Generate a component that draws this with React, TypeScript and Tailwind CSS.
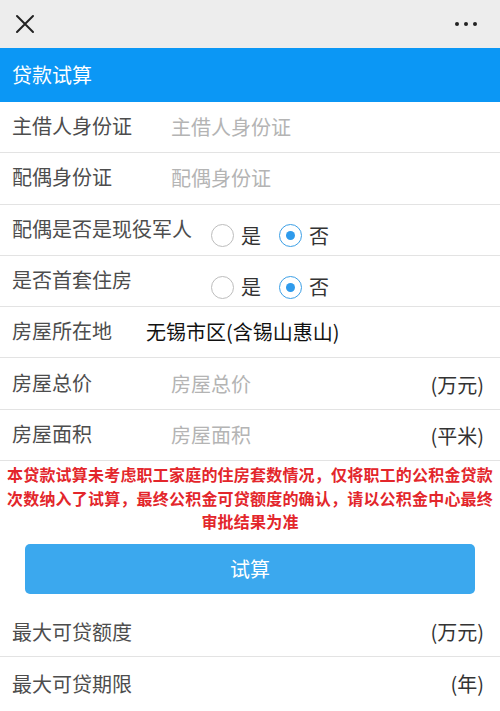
import React from "react";

const font = { fontFamily: '"Noto Sans CJK SC", "Noto Sans", sans-serif' };

function Radio({ checked }: { checked?: boolean }) {
  return checked ? (
    <span className="flex h-[23px] w-[23px] items-center justify-center rounded-full border-[1.5px] border-[#3c9fe6]">
      <span className="h-[9px] w-[9px] rounded-full bg-[#2f9bec]" />
    </span>
  ) : (
    <span className="h-[23px] w-[23px] rounded-full border-[1.5px] border-[#bdbdbd]" />
  );
}

function Row({ children }: { children: React.ReactNode }) {
  return (
    <div className="flex h-[51.3px] items-center border-b border-[#e3e3e3] pl-[12px] pr-[16px]">
      {children}
    </div>
  );
}

function Label({ text }: { text: string }) {
  return <span className="text-[20px] leading-none text-[#4d4d4d]">{text}</span>;
}

function RadioRow({ label }: { label: string }) {
  return (
    <Row>
      <div className="w-[199px] shrink-0">
        <Label text={label} />
      </div>
      <div className="mt-[12px] flex items-center text-[20px] leading-none text-[#333]">
        <Radio />
        <span className="ml-[7px]">是</span>
        <span className="ml-[18px] flex"><Radio checked /></span>
        <span className="ml-[7px]">否</span>
      </div>
    </Row>
  );
}

export default function App() {
  return (
    <div className="w-[500px] h-[711px] overflow-hidden bg-white" style={font}>
      <div className="flex h-[48px] items-center justify-between bg-[#ededed] pl-[15px] pr-[23px]">
        <svg width="20" height="20" viewBox="0 0 20 20" className="-mt-[1px]">
          <path d="M2 2 L18 18 M18 2 L2 18" stroke="#222" strokeWidth="2" strokeLinecap="round" />
        </svg>
        <div className="flex gap-[5px]">
          <span className="h-[4px] w-[4px] rounded-full bg-[#222]" />
          <span className="h-[4px] w-[4px] rounded-full bg-[#222]" />
          <span className="h-[4px] w-[4px] rounded-full bg-[#222]" />
        </div>
      </div>
      <div className="flex h-[54px] items-center bg-[#0b97f5] pl-[12px] text-[20px] leading-none text-white">
        贷款试算
      </div>
      <Row>
        <div className="w-[159px] shrink-0"><Label text="主借人身份证" /></div>
        <span className="text-[20px] leading-none text-[#b4b4b4]">主借人身份证</span>
      </Row>
      <Row>
        <div className="w-[159px] shrink-0"><Label text="配偶身份证" /></div>
        <span className="text-[20px] leading-none text-[#b4b4b4]">配偶身份证</span>
      </Row>
      <RadioRow label="配偶是否是现役军人" />
      <RadioRow label="是否首套住房" />
      <Row>
        <div className="w-[134px] shrink-0"><Label text="房屋所在地" /></div>
        <span className="text-[20px] leading-none text-[#111]">无锡市区(含锡山惠山)</span>
      </Row>
      <Row>
        <div className="w-[159px] shrink-0"><Label text="房屋总价" /></div>
        <span className="flex-1 text-[20px] leading-none text-[#b4b4b4]">房屋总价</span>
        <span className="mt-[3px] text-[20px] leading-none text-[#333]">(万元)</span>
      </Row>
      <Row>
        <div className="w-[159px] shrink-0"><Label text="房屋面积" /></div>
        <span className="flex-1 text-[20px] leading-none text-[#b4b4b4]">房屋面积</span>
        <span className="mt-[3px] text-[20px] leading-none text-[#333]">(平米)</span>
      </Row>
      <div className="px-[6px] pt-[2px] text-center text-[16px] font-semibold leading-[23.5px] tracking-[0.2px] text-[#e3262b]">
        本贷款试算未考虑职工家庭的住房套数情况，仅将职工的公积金贷款次数纳入了试算，最终公积金可贷额度的确认，请以公积金中心最终审批结果为准
      </div>
      <div className="px-[25px] pt-[10px]">
        <div className="flex h-[50px] items-center justify-center rounded-[5px] bg-[#3ba8ee] text-[20px] leading-none text-white">
          试算
        </div>
      </div>
      <div className="flex h-[63px] items-center justify-between border-b border-[#e3e3e3] pl-[12px] pr-[16px] pt-[14px]">
        <Label text="最大可贷额度" />
        <span className="text-[20px] leading-none text-[#333]">(万元)</span>
      </div>
      <div className="flex h-[54px] items-center justify-between pl-[12px] pr-[16px]">
        <Label text="最大可贷期限" />
        <span className="mt-[1px] text-[20px] leading-none text-[#333]">(年)</span>
      </div>
    </div>
  );
}
